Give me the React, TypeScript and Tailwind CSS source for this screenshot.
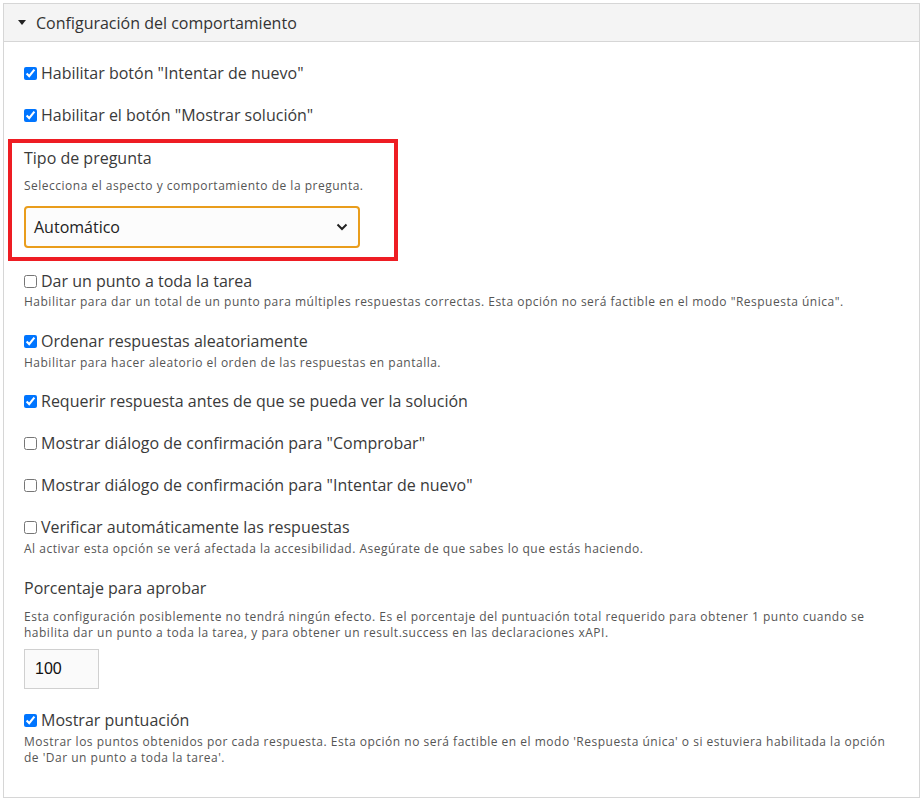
import React from "react";

const font = { fontFamily: '"Open Sans", "Liberation Sans", sans-serif' };

function Check({
  checked,
  label,
  desc,
  mb = "mb-[18px]",
  dmt = "mt-[2px]",
}: {
  checked: boolean;
  label: string;
  desc?: React.ReactNode;
  mb?: string;
  dmt?: string;
}) {
  return (
    <div className={mb}>
      <label className="flex h-6 items-center text-[16px] font-medium text-[#3a3a3a]">
        <input
          type="checkbox"
          defaultChecked={checked}
          className="m-0 mr-[4px] h-[13px] w-[13px] accent-[#0075ff]"
        />
        <span>{label}</span>
      </label>
      {desc && <div className={`${dmt} text-[12px] leading-[16px] tracking-[0.5px] text-[#555]`}>{desc}</div>}
    </div>
  );
}

export default function App() {
  return (
    <div className="bg-white p-[3px]" style={font}>
      <div className="h-[795px] w-[917px] border border-[#d6d6d6]">
        <div className="flex h-[38px] items-center border-b border-[#d6d6d6] bg-[#f4f4f4] pl-[14px] text-[16px] text-[#333]">
          <svg width="8" height="5" viewBox="0 0 8 5" className="mr-[10px]">
            <path d="M0 0H8L4 5Z" fill="#222" />
          </svg>
          Configuración del comportamiento
        </div>
        <div className="px-[20px] pt-[19px]">
          <Check checked label={'Habilitar botón "Intentar de nuevo"'} />
          <Check checked label={'Habilitar el botón "Mostrar solución"'} />

          <div className="relative mb-[21px] pt-[1px]">
            <div className="pointer-events-none absolute left-[-16px] top-[-6px] h-[122px] w-[390px] border-4 border-[#ee1d23]" />
            <div className="flex h-6 items-center text-[16px] font-medium text-[#3a3a3a]">Tipo de pregunta</div>
            <div className="mt-[8px] text-[12px] leading-[16px] tracking-[0.5px] text-[#555]">
              Selecciona el aspecto y comportamiento de la pregunta.
            </div>
            <div className="mt-[12px] flex h-[42px] w-[336px] items-center justify-between rounded-[4px] border-2 border-[#e99d1c] bg-[#fcfcfc] pl-[8px] pr-[10px] text-[16px] text-[#222]">
              <span>Automático</span>
              <svg width="12" height="8" viewBox="0 0 12 8">
                <path d="M1.5 1.5L6 6L10.5 1.5" stroke="#222" strokeWidth="2" fill="none" />
              </svg>
            </div>
          </div>

          <Check
            checked={false}
            dmt="mt-[1px]"
            mb="mb-[19px]"
            label="Dar un punto a toda la tarea"
            desc={'Habilitar para dar un total de un punto para múltiples respuestas correctas. Esta opción no será factible en el modo "Respuesta única".'}
          />
          <Check
            checked
            label="Ordenar respuestas aleatoriamente"
            desc="Habilitar para hacer aleatorio el orden de las respuestas en pantalla."
          />
          <Check checked label="Requerir respuesta antes de que se pueda ver la solución" />
          <Check checked={false} label={'Mostrar diálogo de confirmación para "Comprobar"'} />
          <Check checked={false} label={'Mostrar diálogo de confirmación para "Intentar de nuevo"'} />
          <Check
            checked={false}
            mb="mb-[19px]"
            label="Verificar automáticamente las respuestas"
            desc="Al activar esta opción se verá afectada la accesibilidad. Asegúrate de que sabes lo que estás haciendo."
          />

          <div className="mb-[19px]">
            <div className="flex h-6 items-center text-[16px] font-medium text-[#3a3a3a]">Porcentaje para aprobar</div>
            <div className="mt-[9px] text-[12px] leading-[16px] tracking-[0.5px] text-[#555]">
              Esta configuración posiblemente no tendrá ningún efecto. Es el porcentaje del puntuación total requerido para obtener 1 punto cuando se habilita dar un punto a toda la tarea, y para obtener un result.success en las declaraciones xAPI.
            </div>
            <div
              className="mt-[8px] flex h-[40px] w-[75px] items-center border border-[#d0d0d0] bg-[#fafafa] pl-[10px] text-[16px] text-[#111]"
              style={{ fontFamily: '"Liberation Sans", Arial, sans-serif' }}
            >
              100
            </div>
          </div>

          <Check
            checked
            dmt="mt-[2px]"
            label="Mostrar puntuación"
            desc="Mostrar los puntos obtenidos por cada respuesta. Esta opción no será factible en el modo 'Respuesta única' o si estuviera habilitada la opción de 'Dar un punto a toda la tarea'."
          />
        </div>
      </div>
    </div>
  );
}
